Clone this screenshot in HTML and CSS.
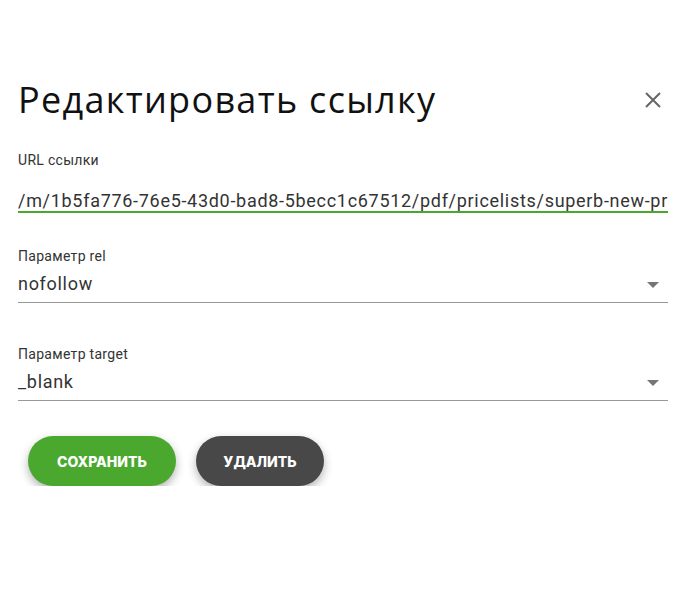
FILE: index.html
```html
<!DOCTYPE html>
<html lang="ru">
<head>
  <meta charset="UTF-8">
  <title>Редактировать ссылку</title>
  <link rel="stylesheet" href="styles.css">
</head>
<body>
  <div class="link-dialog">
    <div class="dialog-header">
      <h2>Редактировать ссылку</h2>
      <button class="close-button" aria-label="Закрыть">
        <svg width="16" height="16" viewBox="0 0 16 16"><path d="M1 1L15 15M15 1L1 15" stroke="#666" stroke-width="2"/></svg>
      </button>
    </div>

    <div class="field field-url">
      <label>URL ссылки</label>
      <div class="input input-active">/m/1b5fa776-76e5-43d0-bad8-5becc1c67512/pdf/pricelists/superb-new-price.pdf</div>
    </div>

    <div class="field field-rel">
      <label>Параметр rel</label>
      <div class="input select">nofollow<span class="arrow"></span></div>
    </div>

    <div class="field field-target">
      <label>Параметр target</label>
      <div class="input select">_blank<span class="arrow"></span></div>
    </div>

    <div class="actions">
      <button class="btn btn-save">Сохранить</button>
      <button class="btn btn-delete">Удалить</button>
    </div>
  </div>
</body>
</html>
```

FILE: styles.css
```css
body {
  margin: 0;
  background: #fff;
  font-family: Roboto, "Liberation Sans", sans-serif;
  color: #333;
}
.link-dialog {
  padding: 76px 17px 0 18px;
}
.dialog-header {
  display: flex;
  justify-content: space-between;
  align-items: center;
}
.dialog-header h2 {
  margin: 0;
  font-family: "Open Sans", sans-serif;
  font-size: 36px;
  letter-spacing: 1.3px;
  line-height: 48px;
  font-weight: 400;
  color: #111;
}
.close-button {
  background: none;
  border: none;
  padding: 0;
  width: 16px;
  height: 16px;
  margin-right: 7px;
  cursor: pointer;
  display: flex;
}
.field label {
  display: block;
  font-size: 14px;
  letter-spacing: 0.3px;
  line-height: 20px;
  color: #333;
}
.field-url {
  margin-top: 26px;
}
.field-rel {
  margin-top: 33px;
}
.field-target {
  margin-top: 41px;
}
.input {
  font-size: 18px;
  letter-spacing: 0.7px;
  color: #333;
  white-space: nowrap;
  overflow: hidden;
  border-bottom: 1px solid #999;
  line-height: 36px;
  height: 36px;
  position: relative;
}
.input-active {
  padding-top: 20px;
  line-height: 21px;
  height: 21px;
  border-bottom: 2px solid #4aa82f;
}
.select .arrow {
  position: absolute;
  right: 9px;
  top: 16px;
  width: 0;
  height: 0;
  border-left: 6px solid transparent;
  border-right: 6px solid transparent;
  border-top: 6px solid #757575;
}
.actions {
  display: flex;
  gap: 20px;
  margin-top: 35px;
  padding-left: 10px;
}
.btn {
  height: 50px;
  border: none;
  border-radius: 25px;
  color: #fff;
  font-family: Inter, "Noto Sans", sans-serif;
  font-weight: 800;
  font-size: 14px;
  text-transform: uppercase;
  box-shadow: 0 4px 10px rgba(0,0,0,0.3);
  cursor: pointer;
}
.btn-save {
  width: 148px;
  background: #4aa82f;
}
.btn-delete {
  width: 128px;
  background: #484848;
}
```
